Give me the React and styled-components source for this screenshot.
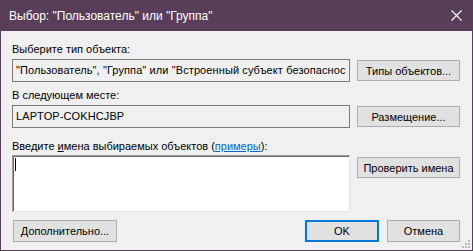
import React from 'react'
import styled, { createGlobalStyle } from 'styled-components'

const GlobalStyle = createGlobalStyle`
	html, body {
		margin: 0;
		padding: 0;
		background: #f0f0f0;
	}
	* {
		box-sizing: border-box;
	}
`

const Window = styled.div`
	position: relative;
	width: 473px;
	height: 251px;
	display: flex;
	flex-direction: column;
	background: #f0f0f0;
	border: 1px solid #583e58;
	border-top: none;
	font-family: 'Liberation Sans', Arial, sans-serif;
	font-size: 11px;
	color: #000;
	overflow: hidden;
`

const TitleBar = styled.div`
	height: 31px;
	flex: none;
	display: flex;
	align-items: center;
	justify-content: space-between;
	padding: 0 10px 0 8px;
	background: #583e58;
	color: #fff;
	font-size: 12px;
`

const Body = styled.div`
	flex: 1;
	display: flex;
	flex-direction: column;
	padding: 12px 11px 0 11px;
`

const Label = styled.div`
	height: 13px;
	line-height: 13px;
	margin-bottom: ${p => p.$gap || 3}px;
	white-space: nowrap;
`

const Row = styled.div`
	display: grid;
	grid-template-columns: 338px 103px;
	column-gap: 7px;
	align-items: ${p => p.$align || 'center'};
	margin-bottom: ${p => p.$gap || 0}px;
`

const Field = styled.div`
	height: 23px;
	line-height: 21px;
	padding: 0 3px;
	border: 1px solid #7a7a7a;
	background: #f0f0f0;
	white-space: nowrap;
	overflow: hidden;
	letter-spacing: 0.1px;
`

const Memo = styled.div`
	position: relative;
	height: 57px;
	background: #fff;
	border: 1px solid;
	border-color: #a0a0a0 #e3e3e3 #e3e3e3 #a0a0a0;
	box-shadow: inset 1px 1px 0 #696969;
`

const Caret = styled.span`
	position: absolute;
	left: 2px;
	top: 2px;
	width: 1px;
	height: 13px;
	background: #000;
`

const Button = styled.div`
	height: ${p => p.$h || 21}px;
	width: ${p => p.$w ? `${p.$w}px` : 'auto'};
	margin-top: ${p => p.$mt || 0}px;
	display: flex;
	align-items: center;
	justify-content: center;
	background: #e1e1e1;
	border: ${p => p.$default ? '2px solid #0078d7' : '1px solid #adadad'};
	white-space: nowrap;
`

const Link = styled.span`
	color: #0066cc;
	text-decoration: underline;
`

const Footer = styled.div`
	display: flex;
	align-items: center;
	padding: 0 1px;
	gap: 8px;

	& > :first-child {
		margin-right: auto;
	}
`

const Grip = styled.svg`
	position: absolute;
	right: 1px;
	bottom: 1px;
`

const CloseIcon = () => (
	<svg width='11' height='11' viewBox='0 0 11 11'>
		<path d='M0.5 0.5 L10.5 10.5 M10.5 0.5 L0.5 10.5' stroke='#fff' strokeWidth='1.2' />
	</svg>
)

const App = () => {
	return (
		<>
			<GlobalStyle />
			<Window>
				<TitleBar>
					<span>Выбор: "Пользователь" или "Группа"</span>
					<CloseIcon />
				</TitleBar>
				<Body>
					<Label>Выберите тип объекта:</Label>
					<Row $gap={7}>
						<Field>"Пользователь", "Группа" или "Встроенный субъект безопаснос</Field>
						<Button>Типы объектов...</Button>
					</Row>
					<Label>В следующем месте:</Label>
					<Row $gap={12}>
						<Field>LAPTOP-COKHCJBP</Field>
						<Button>Размещение...</Button>
					</Row>
					<Label $gap={2}>
						Введите <u>и</u>мена выбираемых объектов (<Link>примеры</Link>):
					</Label>
					<Row $align='start' $gap={8}>
						<Memo>
							<Caret />
						</Memo>
						<Button $mt={2}>Проверить имена</Button>
					</Row>
					<Footer>
						<Button $w={104} $h={22}>Дополнительно...</Button>
						<Button $w={74} $h={22} $default>OK</Button>
						<Button $w={73} $h={22}>Отмена</Button>
					</Footer>
				</Body>
				<Grip width='10' height='10' viewBox='0 0 10 10'>
					<rect x='7' y='1' width='2' height='2' fill='#bcbcbc' />
					<rect x='4' y='4' width='2' height='2' fill='#bcbcbc' />
					<rect x='7' y='4' width='2' height='2' fill='#bcbcbc' />
					<rect x='1' y='7' width='2' height='2' fill='#bcbcbc' />
					<rect x='4' y='7' width='2' height='2' fill='#bcbcbc' />
					<rect x='7' y='7' width='2' height='2' fill='#bcbcbc' />
				</Grip>
			</Window>
		</>
	)
}

export default App
